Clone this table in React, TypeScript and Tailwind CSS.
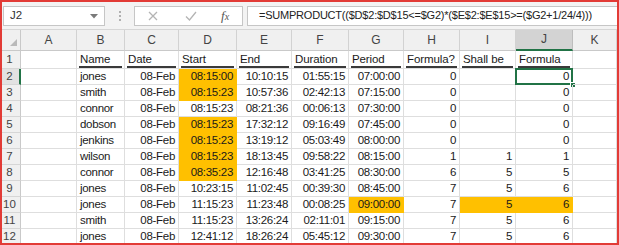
import React from 'react';

const colLetters = ['A', 'B', 'C', 'D', 'E', 'F', 'G', 'H', 'I', 'J', 'K'];

// B..J values, one row per sheet row 2..12
const data: string[][] = [
  ['jones', '08-Feb', '08:15:00', '10:10:15', '01:55:15', '07:00:00', '0', '', '0'],
  ['smith', '08-Feb', '08:15:23', '10:57:36', '02:42:13', '07:15:00', '0', '', '0'],
  ['connor', '08-Feb', '08:15:23', '08:21:36', '00:06:13', '07:30:00', '0', '', '0'],
  ['dobson', '08-Feb', '08:15:23', '17:32:12', '09:16:49', '07:45:00', '0', '', '0'],
  ['jenkins', '08-Feb', '08:15:23', '13:19:12', '05:03:49', '08:00:00', '0', '', '0'],
  ['wilson', '08-Feb', '08:15:23', '18:13:45', '09:58:22', '08:15:00', '1', '1', '1'],
  ['connor', '08-Feb', '08:35:23', '12:16:48', '03:41:25', '08:30:00', '6', '5', '5'],
  ['jones', '08-Feb', '10:23:15', '11:02:45', '00:39:30', '08:45:00', '7', '5', '6'],
  ['jones', '08-Feb', '11:15:23', '11:23:48', '00:08:25', '09:00:00', '7', '5', '6'],
  ['smith', '08-Feb', '11:15:23', '13:26:24', '02:11:01', '09:15:00', '7', '5', '6'],
  ['jones', '08-Feb', '12:41:12', '18:26:24', '05:45:12', '09:30:00', '7', '5', '6'],
];

const headings = ['Name', 'Date', 'Start', 'End', 'Duration', 'Period', 'Formula?', 'Shall be', 'Formula'];

// sheet row -> column indexes (A=0) with the gold fill
const filled: Record<number, number[]> = {
  2: [3],
  3: [3],
  5: [3],
  6: [3],
  7: [3],
  8: [3],
  10: [6, 8, 9],
};

const FormulaBar = () => (
  <div className="flex items-center h-[28px] bg-[#f3f3f3] border-b border-[#d6d6d6] pl-[1px]">
    <div className="relative flex items-center w-[102px] h-[20px] bg-white border border-[#c6c6c6] pl-[6px] text-[11.5px] text-[#333]">
      J2
      <svg className="absolute right-[6px] top-[7px]" width="8" height="5" viewBox="0 0 8 5">
        <path d="M0 0 L8 0 L4 4.5 Z" fill="#7a7a7a" />
      </svg>
    </div>
    <div className="flex flex-col gap-[2px] ml-[14px] mr-[13px]">
      <span className="w-[2px] h-[2px] bg-[#b0b0b0]" />
      <span className="w-[2px] h-[2px] bg-[#b0b0b0]" />
      <span className="w-[2px] h-[2px] bg-[#b0b0b0]" />
    </div>
    <div className="flex items-center w-[109px] h-[20px] bg-white border border-[#c6c6c6]">
      <svg className="ml-[13px]" width="10" height="10" viewBox="0 0 10 10">
        <path d="M1 1 L9 9 M9 1 L1 9" stroke="#b4b4b4" strokeWidth="1.3" />
      </svg>
      <svg className="ml-[27px]" width="12" height="10" viewBox="0 0 12 10">
        <path d="M1 5.5 L4.5 9 L11 1" stroke="#b4b4b4" strokeWidth="1.3" fill="none" />
      </svg>
      <span className="ml-[24px] text-[13px] italic text-[#555] font-['Liberation_Serif',serif] leading-none">
        f<span className="text-[10px]">x</span>
      </span>
    </div>
    <div className="flex items-center flex-1 h-[20px] ml-[4px] bg-white border border-[#c6c6c6] border-r-0 pl-[11px] text-[#222] tracking-[-0.22px] whitespace-nowrap overflow-hidden">
      =SUMPRODUCT(($D$2:$D$15&lt;=$G2)*($E$2:$E$15&gt;=($G2+1/24/4)))
    </div>
  </div>
);

const HeaderRow = () => (
  <>
    <div className="relative h-[21px] bg-[#f0f0f0] border-r border-b border-[#c9c9c9]">
      <svg className="absolute right-[3px] bottom-[4px]" width="7" height="7" viewBox="0 0 7 7">
        <path d="M7 0 L7 7 L0 7 Z" fill="#b9b9b9" />
      </svg>
    </div>
    {colLetters.map((c) => (
      <div
        key={c}
        className={
          c === 'J'
            ? 'flex items-center justify-center h-[21px] bg-[#d3d3d3] border-r border-[#bdbdbd] border-b-2 border-b-[#217346] text-[12px] text-[#444]'
            : 'flex items-center justify-center h-[21px] bg-[#f0f0f0] border-r border-b border-[#d2d2d2] border-b-[#c9c9c9] text-[12px] text-[#444]'
        }
      >
        {c}
      </div>
    ))}
  </>
);

const RowHead = ({ n, tall }: { n: number; tall?: boolean }) => (
  <div
    className={
      n === 2
        ? 'flex items-center justify-center pr-[2px] h-[16px] bg-[#e2e2e2] border-r-2 border-r-[#217346] border-b border-[#d6d6d6] text-[11.5px] text-[#444]'
        : tall
          ? 'flex items-center justify-center pr-[3px] h-[18px] bg-[#f0f0f0] border-r border-r-[#c9c9c9] border-b border-[#d6d6d6] text-[11.5px] text-[#444]'
          : 'flex items-center justify-center pr-[3px] h-[16px] bg-[#f0f0f0] border-r border-r-[#c9c9c9] border-b border-[#d6d6d6] text-[11.5px] text-[#444]'
    }
  >
    {n}
  </div>
);

export default function App() {
  return (
    <div className="w-[619px] h-[245px] overflow-hidden bg-white border-2 border-[#e23b36] font-['Liberation_Sans',Arial,sans-serif] text-[11px] leading-[15px] select-none">
      <FormulaBar />
      <div className="grid grid-cols-[19px_56px_48px_54px_58px_55px_57px_55px_56px_56px_57px_44px]">
        <HeaderRow />

        {/* row 1: headings with accounting underline */}
        <RowHead n={1} tall />
        <div className="h-[18px] border-r border-b border-[#dedede]" />
        {headings.map((h) => (
          <div key={h} className="h-[18px] border-r border-b border-[#dedede] px-[2px] pt-[1px]">
            <div className="border-b-2 border-[#3a3a3a] pl-[1px] text-[11.5px] text-[#1a1a1a] tracking-[-0.1px] leading-[14px] whitespace-nowrap">
              {h}
            </div>
          </div>
        ))}
        <div className="h-[18px] border-r border-b border-[#dedede]" />

        {data.map((row, i) => {
          const n = i + 2;
          const gold = filled[n] || [];
          const cells = ['', ...row, ''];
          return (
            <React.Fragment key={n}>
              <RowHead n={n} />
              {cells.map((v, ci) => {
                const isGold = gold.includes(ci);
                return (
                  <div
                    key={ci}
                    className={
                      (isGold ? 'bg-[#ffc000] border-[#ffc000] ' : 'border-[#dedede] ') +
                      (ci === 1 ? 'text-left pl-[3px] ' : 'text-right pr-[3px] ') +
                      'relative h-[16px] border-r border-b text-[11.5px] text-[#1a1a1a] tracking-[-0.3px] whitespace-nowrap'
                    }
                  >
                    {v}
                    {n === 2 && ci === 9 && (
                      <>
                        <div className="absolute left-[-1px] top-[-1px] right-[-1px] bottom-[-1px] border-2 border-[#217346]" />
                        <div className="absolute right-[-4px] bottom-[-4px] w-[6px] h-[6px] bg-[#217346] border border-white" />
                      </>
                    )}
                  </div>
                );
              })}
            </React.Fragment>
          );
        })}
      </div>
    </div>
  );
}
